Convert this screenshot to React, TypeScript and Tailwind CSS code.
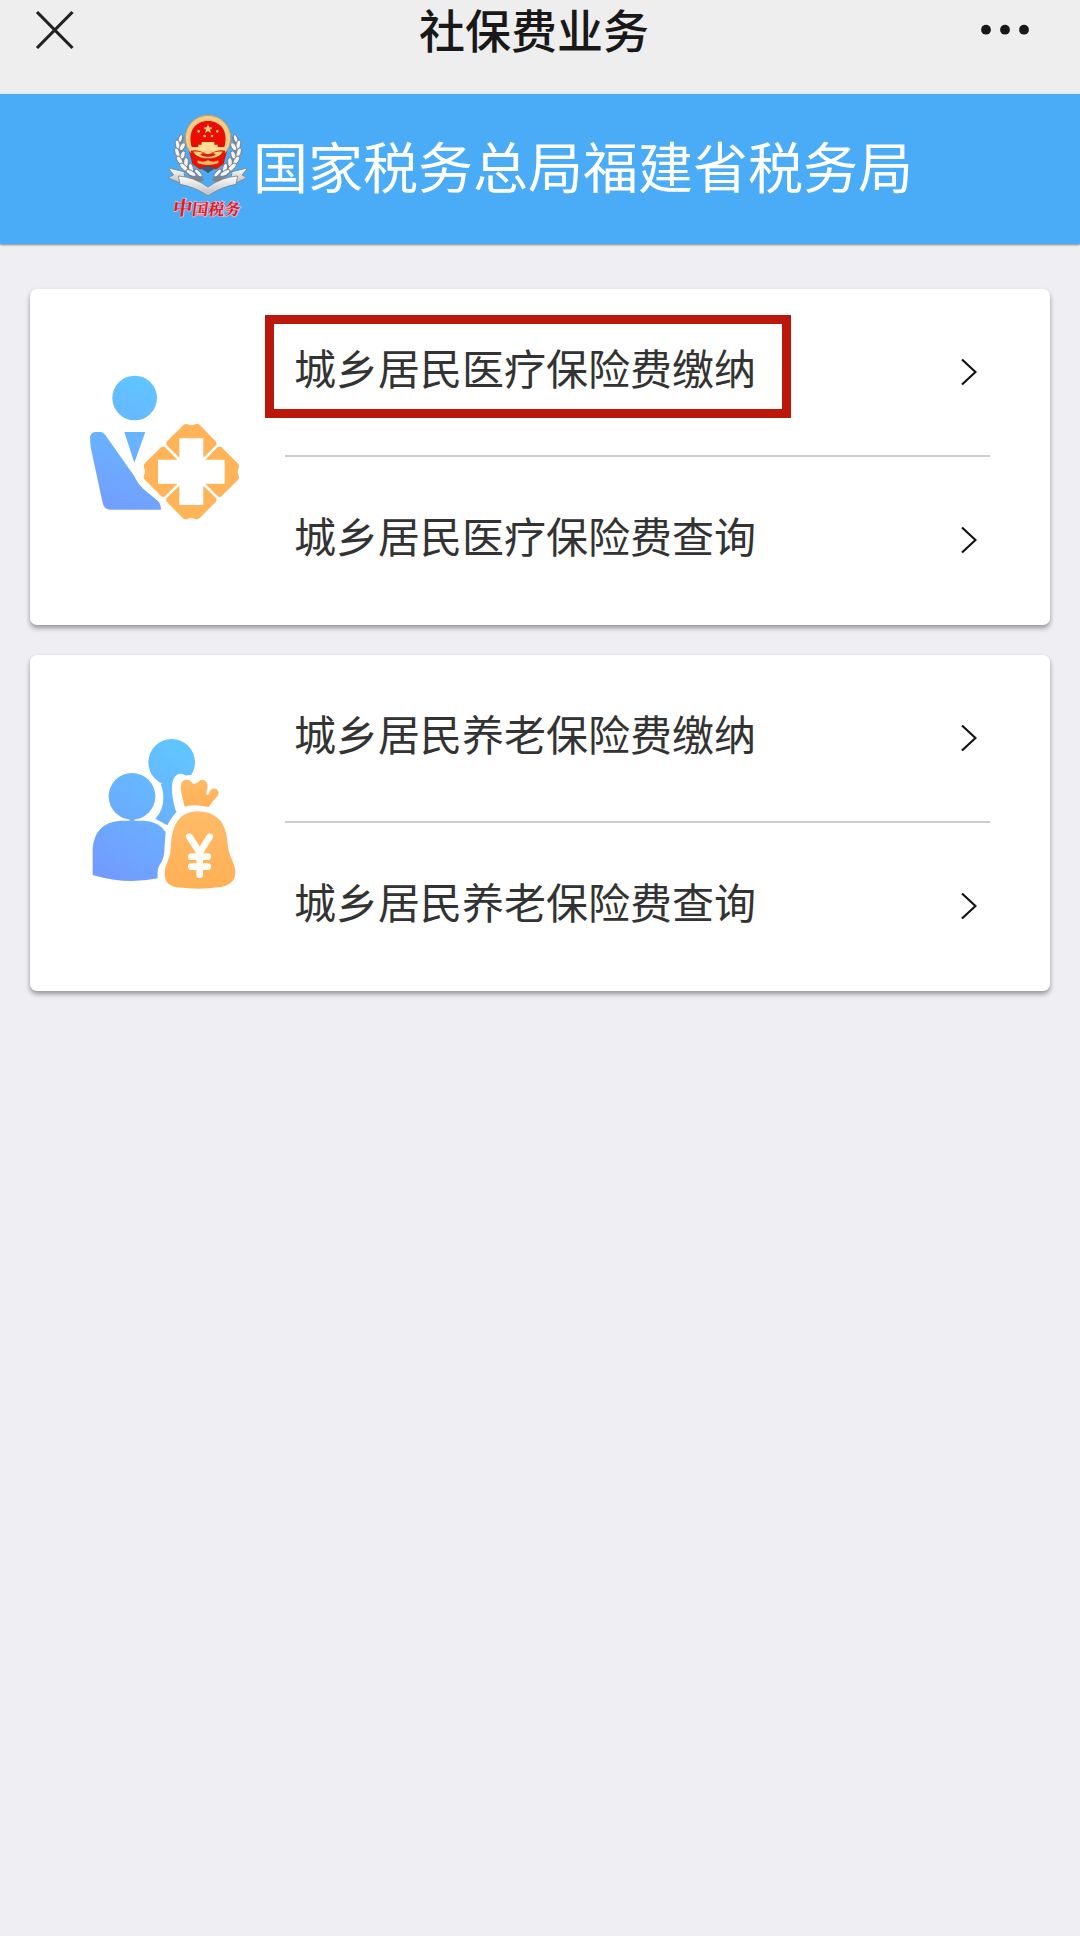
import type { ReactNode } from "react";
import clsx from "clsx";

interface ServiceItem {
  label: string;
  highlighted?: boolean;
}

interface ServiceGroup {
  id: string;
  icon: ReactNode;
  items: ServiceItem[];
}

const groups: ServiceGroup[] = [
  {
    id: "medical",
    icon: <MedicalIcon />,
    items: [
      { label: "城乡居民医疗保险费缴纳", highlighted: true },
      { label: "城乡居民医疗保险费查询" },
    ],
  },
  {
    id: "pension",
    icon: <PensionIcon />,
    items: [
      { label: "城乡居民养老保险费缴纳" },
      { label: "城乡居民养老保险费查询" },
    ],
  },
];

export default function App() {
  return (
    <div className="flex min-h-[1936px] w-full flex-col bg-[#efeef3] font-['Noto_Sans_CJK_SC',sans-serif]">
      <NavBar />
      <Banner />
      <main className="flex flex-col gap-[30px] px-[30px] pt-[45px]">
        {groups.map((group) => (
          <ServiceCard key={group.id} group={group} />
        ))}
      </main>
    </div>
  );
}

function NavBar() {
  return (
    <nav className="flex h-[94px] items-start justify-between bg-[#eeeeee] pr-[50px] pl-[35px] text-[#181818]">
      <button type="button" aria-label="关闭" className="mt-2.5">
        <svg className="h-10 w-10" viewBox="0 0 40 40" fill="none" stroke="#222" strokeWidth="3.2">
          <path d="M2 2 37.5 38M37.5 2 2 38" />
        </svg>
      </button>
      <h1 className="ml-3 font-['Liberation_Sans','Noto_Sans_CJK_SC',sans-serif] text-[46px] leading-[64px] font-medium">
        社保费业务
      </h1>
      <button type="button" aria-label="更多" className="mt-6">
        <svg className="h-3 w-[49px]" viewBox="0 0 49 12" fill="#181818">
          <circle cx="5" cy="5.7" r="4.9" />
          <circle cx="24" cy="5.7" r="4.9" />
          <circle cx="43" cy="5.7" r="4.9" />
        </svg>
      </button>
    </nav>
  );
}

function Banner() {
  return (
    <header className="flex h-[150px] items-start bg-[#4aabf6] pt-[6px] pl-[155px] shadow-[0_1px_2px_rgba(0,0,0,0.45)]">
      <TaxEmblem />
      <p className="pt-[24px] pl-0.5 text-[55px] leading-[80px] whitespace-nowrap text-white">
        国家税务总局福建省税务局
      </p>
    </header>
  );
}

function ServiceCard({ group }: { group: ServiceGroup }) {
  return (
    <section className="flex h-[336px] rounded-[7px] bg-white pr-[60px] pl-10 shadow-[0_3px_5px_rgba(0,0,0,0.38)]">
      <div className="mr-[25px] pt-[65px]">{group.icon}</div>
      <ul className="flex-1">
        {group.items.map((item, i) => (
          <li
            key={item.label}
            className={clsx(
              "relative flex items-center justify-between pr-[13px] pl-[9px]",
              i === 0 ? "h-[168px] border-b-2 border-[#cdcdcd]" : "h-[166px]",
            )}
          >
            {item.highlighted && (
              <span className="absolute top-[26px] -left-5 h-[103px] w-[526px] border-9 border-[#bc170b]" />
            )}
            <span className="pb-[11px] text-[42px] leading-[60px] text-[#333]">{item.label}</span>
            <svg className="h-7 w-4" viewBox="0 0 16 28" fill="none" stroke="#111" strokeWidth="2.2">
              <path d="M1 1.5 14.5 14 1 26.5" />
            </svg>
          </li>
        ))}
      </ul>
    </section>
  );
}

function TaxEmblem() {
  return (
    <svg className="h-[130px] w-24 shrink-0" viewBox="0 0 288 390">
      <defs>
        <linearGradient id="silver" x1="0" y1="0" x2="0" y2="1">
          <stop offset="0" stopColor="#ffffff" />
          <stop offset="1" stopColor="#b9bcc0" />
        </linearGradient>
        <g id="wheat" fill="#f4f4f2" stroke="#6c7681" strokeWidth="2.5">
          <path d="M80 110Q62 160 92 204T144 234" fill="none" stroke="#7b848e" strokeWidth="15" />
          <ellipse cx="76" cy="116" rx="6" ry="13" transform="rotate(18 76 116)" />
          <ellipse cx="68" cy="134" rx="7" ry="14" transform="rotate(-10 68 134)" />
          <ellipse cx="82" cy="140" rx="7" ry="13" transform="rotate(28 82 140)" />
          <ellipse cx="67" cy="158" rx="7" ry="15" transform="rotate(-20 67 158)" />
          <ellipse cx="83" cy="165" rx="7" ry="13" transform="rotate(18 83 165)" />
          <ellipse cx="74" cy="181" rx="7" ry="15" transform="rotate(-32 74 181)" />
          <ellipse cx="93" cy="187" rx="7" ry="14" transform="rotate(4 93 187)" />
          <ellipse cx="87" cy="202" rx="7" ry="16" transform="rotate(-46 87 202)" />
          <ellipse cx="108" cy="204" rx="7" ry="14" transform="rotate(-12 108 204)" />
          <ellipse cx="108" cy="219" rx="7" ry="17" transform="rotate(-60 108 219)" />
          <ellipse cx="130" cy="219" rx="6" ry="15" transform="rotate(-42 130 219)" />
        </g>
      </defs>
      {/* wheat ears */}
      <use href="#wheat" />
      <use href="#wheat" transform="translate(318 0) scale(-1 1)" />
      {/* national emblem */}
      <path d="M102 154h114l-10 38-22 16h-50l-22-16z" fill="#e31408" />
      <circle cx="159" cy="114" r="68" fill="#f5cb85" stroke="#d49a55" strokeWidth="3" />
      <path d="M110 141c-13-46 10-78 49-78s62 32 49 78z" fill="#e90e05" />
      <path d="m159 73 4 9 10 1-8 6 3 10-9-6-9 6 3-10-8-6 10-1z" fill="#ffd27c" />
      <g fill="#ffc56b">
        <circle cx="131" cy="94" r="4" />
        <circle cx="187" cy="94" r="4" />
        <circle cx="149" cy="108" r="4" />
        <circle cx="171" cy="108" r="4" />
      </g>
      <path d="M140 126h38v8h10v10h20v8h-98v-8h20v-10h10z" fill="#ffdf96" />
      <path d="M107 152c17-4 31 0 52 12 21-12 35-16 52-12l-6 37H113z" fill="#e31408" />
      <path d="M115 155c17-2 29 2 44 12 15-10 27-14 44-12-8 14-24 20-44 20s-36-6-44-20z" fill="#ffcd7b" />
      <path d="M136 164q23 13 46 0l-7-5q-16 8-32 0z" fill="#e31408" />
      <path d="M128 181q15 8 31 0 16 8 31 0v9q-31 10-62 0z" fill="#f8b461" />
      <path d="M136 203q23-10 46 0l-23 16z" fill="#45536a" />
      {/* ribbon */}
      <g fill="url(#silver)" stroke="#7e858d" strokeWidth="2.5" strokeLinejoin="round">
        <path d="m40 204 47 11 4 27-15-3-2 10-35-16 17-8z" />
        <path d="m278 204-47 11-4 27 15-3 2 10 31-16-14-8z" />
        <path d="M70 228q46 3 89 33 43-30 89-33l-5 25q-46 8-84 35-38-27-84-35z" />
      </g>
      <text
        x="52"
        y="346"
        fill="#d51c2b"
        stroke="#e0b9cf"
        strokeWidth="5"
        paintOrder="stroke"
        transform="skewX(-8) translate(48 0)"
        className="font-['Noto_Serif_CJK_SC','Noto_Sans_CJK_SC',serif] text-[48px] font-bold"
        textLength="202"
      >
        <tspan className="text-[58px]">中</tspan>国税务
      </text>
    </svg>
  );
}

function MedicalIcon() {
  return (
    <svg className="h-[190px] w-[190px]" viewBox="0 -18 570 570">
      <defs>
        <linearGradient id="medBlue" gradientUnits="userSpaceOnUse" x1="240" y1="60" x2="110" y2="450">
          <stop offset="0" stopColor="#60c5ff" />
          <stop offset="1" stopColor="#739dff" />
        </linearGradient>
      </defs>
      <g fill="url(#medBlue)">
        <circle cx="194" cy="114" r="67" />
        <path d="M163 216h63l-33 92z" />
        <path d="M60 232q2-16 18-16h14q8 0 14 9l87 124q14 30 38 47l33 27q8 7 9 26H122q-20 0-24-20L62 262z" />
      </g>
      <g fill="#ffb459">
        <path
          id="petal"
          d="M290 256q-4-6 1-12l47-47q7-8 15-4 12 6 23 0 7-4 14 3l47 48q5 6 1 12l-38 37v-58h-72v58z"
        />
        <use href="#petal" transform="rotate(90 364 335)" />
        <use href="#petal" transform="rotate(180 364 335)" />
        <use href="#petal" transform="rotate(270 364 335)" />
      </g>
    </svg>
  );
}

function PensionIcon() {
  return (
    <svg className="h-[190px] w-[190px]" viewBox="0 0 570 570">
      <defs>
        <linearGradient id="penBlue" gradientUnits="userSpaceOnUse" x1="340" y1="90" x2="90" y2="480">
          <stop offset="0" stopColor="#60c5ff" />
          <stop offset="1" stopColor="#7399ff" />
        </linearGradient>
        <linearGradient id="bag" x1="0" y1="0" x2="0" y2="1">
          <stop offset="0" stopColor="#ffbb68" />
          <stop offset="1" stopColor="#ffb055" />
        </linearGradient>
      </defs>
      <g fill="url(#penBlue)">
        <circle cx="305" cy="127" r="70" />
        <path d="M276 190h60v72q-26 18-44 54l-36-20q24-24 24-62 0-26-8-40z" />
      </g>
      <path d="M332 182c-10 14-6 44 4 80" fill="none" stroke="#fff" strokeWidth="42" strokeLinecap="round" />
      <path d="m336 184 22-3 20 6 26-6 10 12" fill="none" stroke="#fff" strokeWidth="32" strokeLinecap="round" />
      <circle cx="186" cy="229" r="70" fill="url(#penBlue)" />
      <path
        d="M179 292h14v10h28q46 2 66 34l-3 40q0 42-15 58-8 14-6 41-95 20-195-10v-80q6-76 82-83h29z"
        fill="url(#penBlue)"
      />
      <g fill="url(#bag)">
        <path d="M334 190q4-12 17-11 11 0 17 12 10 2 16-5 10-11 22-4 9 8 6 25-7 14 0 18 6-1 8-13 9-10 20-4 10 8 3 19-18 20-27 34-40-10-72-1l-10-42q-4-16 0-28z" />
        <path d="M380 274q84 0 92 88 2 33 15 60 10 22 9 40-4 34-50 40-60 8-124 0-36-5-38-38 0-22 9-40 10-24 10-55 7-92 77-95z" />
      </g>
      <path
        d="m358 350 31 48 30-48M389 394v70M364 410h49M364 440h49"
        fill="none"
        stroke="#fffdf7"
        strokeWidth="20"
        strokeLinecap="round"
        strokeLinejoin="round"
      />
    </svg>
  );
}
